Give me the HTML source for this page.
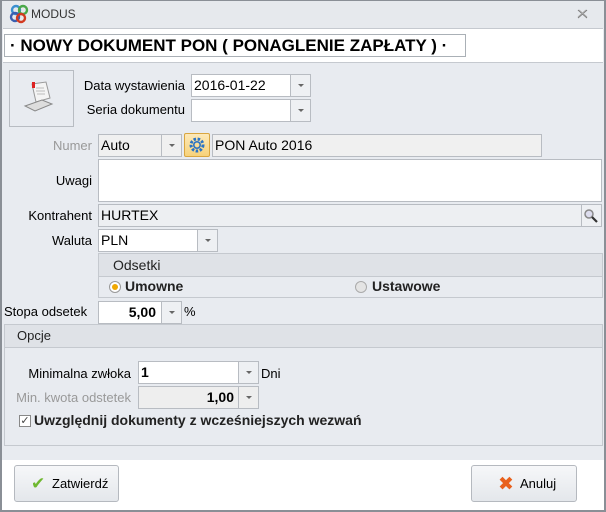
<!DOCTYPE html>
<html><head><meta charset="utf-8"><style>
*{box-sizing:border-box;margin:0;padding:0}
body{width:606px;height:512px;overflow:hidden;font-family:"Liberation Sans","DejaVu Sans",sans-serif;font-size:13px;color:#000;background:#e8ebf0;position:relative}
.a{position:absolute}
.frame{left:0;top:0;width:606px;height:512px;border:2px solid #8a8f96;border-top:1px solid #8a8f96}
.inp{position:absolute;background:#fff;border:1px solid #b8bcc2;height:23px;font-size:14px;line-height:21px;padding-left:2px}
.dd{position:absolute;top:-1px;right:-1px;width:21px;height:23px;border:1px solid #b8bcc2;background:#eef0f3}
.dd:after{content:"";position:absolute;left:7px;top:9px;border-left:3px solid transparent;border-right:3px solid transparent;border-top:3px solid #666}
.lbl{position:absolute;font-size:13px;text-align:right}
.grp{position:absolute;border:1px solid #c5c9cf}
.gh{background:#dfe2e7;border-bottom:1px solid #c5c9cf;height:23px;font-size:14px;line-height:22px;padding-left:12px;color:#222}
.btn{position:absolute;border:1px solid #b5b9bf;border-radius:3px;background:linear-gradient(#f6f7f9,#e4e7eb);font-size:13px}
</style></head><body>
<div class="a" style="left:0;top:0;width:606px;height:28px;background:#e6e9ed"></div>
<svg class="a" style="left:9px;top:4px" width="22" height="20" viewBox="0 0 22 20">
<circle cx="7" cy="6" r="4" fill="none" stroke="#3a8fd0" stroke-width="2.4"/>
<circle cx="14" cy="6" r="4" fill="none" stroke="#4aa84a" stroke-width="2.4"/>
<circle cx="6" cy="13" r="4" fill="none" stroke="#3a5fb0" stroke-width="2.4"/>
<circle cx="12" cy="14" r="4" fill="none" stroke="#d23a20" stroke-width="2.4"/>
</svg>
<div class="a" style="left:31px;top:7px;font-size:12px;color:#333">MODUS</div>
<svg class="a" style="left:577px;top:9px" width="11" height="10" viewBox="0 0 11 10"><path d="M1 1L10 9M10 1L1 9" stroke="#777" stroke-width="1"/><path d="M2 1L10 8M9 1L1 8" stroke="#aaa" stroke-width="1"/></svg>
<div class="a" style="left:3px;top:28px;width:600px;height:35px;background:#fff;border-top:1px solid #c5c9cf;border-bottom:1px solid #c5c9cf"></div>
<div class="a" style="left:4px;top:34px;width:462px;height:23px;border:1px solid #aab0b6;background:#fff;font-size:17px;font-weight:bold;line-height:21px;padding-left:5px;white-space:nowrap;overflow:hidden">· NOWY DOKUMENT PON ( PONAGLENIE ZAPŁATY ) ·</div>

<div class="a" style="left:9px;top:70px;width:65px;height:57px;border:1px solid #b8bcc2;background:#e8ebf0"></div>
<svg class="a" style="left:22px;top:80px" width="38" height="36" viewBox="0 0 38 36">
<path d="M10 4 L24 2 L28 18 L14 22 Z" fill="#f4f4f4" stroke="#999"/>
<path d="M3 26 L20 20 L30 24 L13 31 Z" fill="#ddd" stroke="#888"/>
<rect x="10" y="2" width="3" height="6" fill="#d22"/>
<path d="M14 8h8M14 11h9M15 14h8" stroke="#bbb"/>
</svg>
<div class="lbl" style="left:60px;width:125px;top:78px">Data wystawienia</div>
<div class="inp" style="left:191px;top:74px;width:120px">2016-01-22<div class="dd"></div></div>
<div class="lbl" style="left:60px;width:125px;top:102px">Seria dokumentu</div>
<div class="inp" style="left:191px;top:99px;width:120px"><div class="dd"></div></div>

<div class="lbl" style="left:30px;width:62px;top:138px;color:#999">Numer</div>
<div class="inp" style="left:98px;top:134px;width:84px;background:#f0f0f0">Auto<div class="dd" style="background:#f0f0f0"></div></div>
<div class="a" style="left:184px;top:133px;width:26px;height:24px;border:1px solid #d9a640;border-radius:2px;background:linear-gradient(#fde9b8,#f7d27a)"></div>
<svg class="a" style="left:188px;top:136px" width="18" height="18" viewBox="0 0 18 18"><circle cx="9" cy="9" r="6" fill="none" stroke="#2c74c4" stroke-width="3" stroke-dasharray="2.5 1.6"/><circle cx="9" cy="9" r="3.2" fill="none" stroke="#2c74c4" stroke-width="1.6"/></svg>
<div class="inp" style="left:212px;top:134px;width:330px;background:#f0f0f0">PON Auto 2016</div>

<div class="lbl" style="left:30px;width:62px;top:173px">Uwagi</div>
<div class="inp" style="left:98px;top:159px;width:504px;height:43px"></div>

<div class="lbl" style="left:10px;width:82px;top:208px">Kontrahent</div>
<div class="inp" style="left:98px;top:204px;width:504px;background:#edeff2">HURTEX
<div class="a" style="right:-1px;top:-1px;width:21px;height:23px;border:1px solid #b8bcc2;background:#eef0f3"></div>
<svg class="a" style="right:2px;top:3px" width="16" height="16" viewBox="0 0 16 16"><circle cx="6" cy="6" r="4" fill="#dde" stroke="#888" stroke-width="1.5"/><path d="M9 9l5 5" stroke="#333" stroke-width="2.2"/></svg></div>

<div class="lbl" style="left:10px;width:82px;top:233px">Waluta</div>
<div class="inp" style="left:98px;top:229px;width:120px">PLN<div class="dd"></div></div>

<div class="grp" style="left:98px;top:253px;width:505px;height:45px">
<div class="gh" style="padding-left:14px">Odsetki</div>
<div class="a" style="left:10px;top:27px;width:12px;height:12px;border-radius:50%;border:1px solid #999;background:#fff"><div style="margin:2px;width:6px;height:6px;border-radius:50%;background:#f0a800"></div></div>
<div class="a" style="left:26px;top:24px;font-size:14px;font-weight:bold;color:#222">Umowne</div>
<div class="a" style="left:256px;top:27px;width:12px;height:12px;border-radius:50%;border:1px solid #aaa;background:#e4e4e4"></div>
<div class="a" style="left:273px;top:24px;font-size:14px;font-weight:bold;color:#222">Ustawowe</div>
</div>

<div class="lbl" style="left:4px;top:304px;text-align:left">Stopa odsetek</div>
<div class="inp" style="left:98px;top:301px;width:84px;text-align:right;padding-right:25px;font-weight:bold">5,00<div class="dd"></div></div>
<div class="a" style="left:184px;top:304px">%</div>

<div class="grp" style="left:4px;top:324px;width:599px;height:122px">
<div class="gh" style="font-size:13px">Opcje</div>
</div>
<div class="lbl" style="left:10px;width:121px;top:366px">Minimalna zwłoka</div>
<div class="inp" style="left:138px;top:361px;width:121px;font-weight:bold">1<div class="dd"></div></div>
<div class="a" style="left:261px;top:366px">Dni</div>
<div class="lbl" style="left:5px;width:126px;top:390px;color:#999">Min. kwota odstetek</div>
<div class="inp" style="left:138px;top:386px;width:121px;background:#eee;text-align:right;padding-right:24px;font-weight:bold">1,00<div class="dd" style="background:#eee"></div></div>
<div class="a" style="left:19px;top:415px;width:12px;height:12px;border:1px solid #888;background:#fff;font-size:11px;line-height:10px;text-align:center;color:#444">✓</div>
<div class="a" style="left:34px;top:412px;font-size:14px;font-weight:bold;color:#222">Uwzględnij dokumenty z wcześniejszych wezwań</div>

<div class="a" style="left:2px;top:460px;width:602px;height:50px;background:#fff"></div>
<div class="btn" style="left:14px;top:465px;width:105px;height:37px"><span class="a" style="left:16px;top:8px;color:#6fb830;font-size:17px;font-weight:bold">✔</span><span class="a" style="left:37px;top:10px">Zatwierdź</span></div>
<div class="btn" style="left:471px;top:465px;width:106px;height:37px"><span class="a" style="left:26px;top:7px;color:#e8601c;font-size:19px;font-weight:bold">✖</span><span class="a" style="left:48px;top:10px">Anuluj</span></div>
<div class="a frame"></div>
</body></html>
